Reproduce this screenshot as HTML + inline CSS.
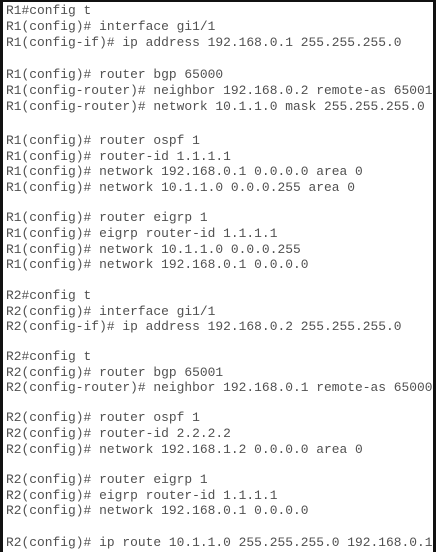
<!DOCTYPE html><html><head><style>
body{margin:0;width:436px;height:552px;background:#fff;overflow:hidden;position:relative}
.f{position:absolute;left:0;top:0;height:552px;border-left:3px solid #111;border-top:2px solid #111;border-right:3px solid #111;box-sizing:border-box;width:436px}
.l{position:absolute;left:6px;font-family:"Liberation Mono",monospace;font-size:12.9px;color:#505050;white-space:pre;line-height:15px;letter-spacing:0.02px}
</style></head><body><div class="f"></div>
<div class="l" style="top:3px">R1#config t</div>
<div class="l" style="top:19px">R1(config)# interface gi1/1</div>
<div class="l" style="top:35px">R1(config-if)# ip address 192.168.0.1 255.255.255.0</div>
<div class="l" style="top:67px">R1(config)# router bgp 65000</div>
<div class="l" style="top:83px">R1(config-router)# neighbor 192.168.0.2 remote-as 65001</div>
<div class="l" style="top:99px">R1(config-router)# network 10.1.1.0 mask 255.255.255.0</div>
<div class="l" style="top:133px">R1(config)# router ospf 1</div>
<div class="l" style="top:149px">R1(config)# router-id 1.1.1.1</div>
<div class="l" style="top:164px">R1(config)# network 192.168.0.1 0.0.0.0 area 0</div>
<div class="l" style="top:180px">R1(config)# network 10.1.1.0 0.0.0.255 area 0</div>
<div class="l" style="top:210px">R1(config)# router eigrp 1</div>
<div class="l" style="top:226px">R1(config)# eigrp router-id 1.1.1.1</div>
<div class="l" style="top:242px">R1(config)# network 10.1.1.0 0.0.0.255</div>
<div class="l" style="top:257px">R1(config)# network 192.168.0.1 0.0.0.0</div>
<div class="l" style="top:288px">R2#config t</div>
<div class="l" style="top:304px">R2(config)# interface gi1/1</div>
<div class="l" style="top:319px">R2(config-if)# ip address 192.168.0.2 255.255.255.0</div>
<div class="l" style="top:349px">R2#config t</div>
<div class="l" style="top:365px">R2(config)# router bgp 65001</div>
<div class="l" style="top:380px">R2(config-router)# neighbor 192.168.0.1 remote-as 65000</div>
<div class="l" style="top:410px">R2(config)# router ospf 1</div>
<div class="l" style="top:426px">R2(config)# router-id 2.2.2.2</div>
<div class="l" style="top:442px">R2(config)# network 192.168.1.2 0.0.0.0 area 0</div>
<div class="l" style="top:472px">R2(config)# router eigrp 1</div>
<div class="l" style="top:488px">R2(config)# eigrp router-id 1.1.1.1</div>
<div class="l" style="top:503px">R2(config)# network 192.168.0.1 0.0.0.0</div>
<div class="l" style="top:535px">R2(config)# ip route 10.1.1.0 255.255.255.0 192.168.0.1</div>
</body></html>
